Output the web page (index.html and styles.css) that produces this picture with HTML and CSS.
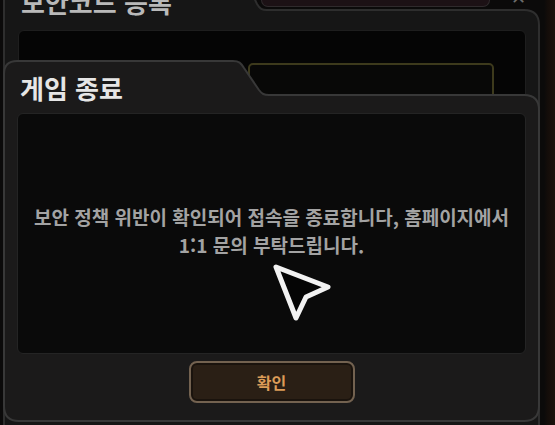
FILE: index.html
```html
<!DOCTYPE html>
<html lang="ko">
<head>
  <meta charset="UTF-8" />
  <meta name="viewport" content="width=device-width, initial-scale=1.0"/>
  <title>게임 종료</title>
  <link rel="stylesheet" href="styles.css">
</head>
<body>
  <div class="desktop">

    <!-- 뒤쪽 창: 보안코드 등록 -->
    <div class="win win-back">
      <svg class="frame" width="537" height="470" viewBox="0 0 537 470">
        <path d="M1 14 Q1 1 14 1 L228 1 C234 1 236 3 239 8 L254 40 C257 45 259 46 264 46 L521 46 Q536 46 536 61 L536 470 L1 470 Z"
              fill="#161616" stroke="#2e2e2e" stroke-width="2"/>
      </svg>
      <div class="back-head">
        <h2 class="back-title">보안코드 등록</h2>
        <div class="back-field"></div>
        <span class="back-close">✕</span>
      </div>
      <div class="back-panel">
        <div class="code-input"></div>
      </div>
    </div>

    <!-- 앞쪽 창: 게임 종료 -->
    <div class="win win-front">
      <svg class="frame" width="537" height="362" viewBox="0 0 537 362">
        <path d="M1 14 Q1 1 14 1 L230 1 C236 1 238 3 241 8 L256 30 C259 34 261 35 266 35 L521 35 Q536 35 536 50 L536 346 Q536 361 521 361 L16 361 Q1 361 1 346 Z"
              fill="#1b1a1a" stroke="#383838" stroke-width="2"/>
      </svg>
      <h1 class="dlg-title">게임 종료</h1>
      <div class="dlg-body">
        <p class="dlg-msg">보안 정책 위반이 확인되어 접속을 종료합니다, 홈페이지에서<br>1:1 문의 부탁드립니다.</p>
      </div>
      <div class="dlg-foot">
        <button class="ok-btn">확인</button>
      </div>
    </div>

    <svg class="cursor" width="72" height="68" viewBox="0 0 72 68">
      <polygon points="10,8 62,28 40,38 30,59" fill="#050505" stroke="#f2f2f2" stroke-width="5" stroke-linejoin="round"/>
    </svg>
  </div>
</body>
</html>
```

FILE: styles.css
```css
* {
  box-sizing: border-box;
  padding: 0;
  margin: 0;
}

body {
  font-family: "Noto Sans CJK KR", "Noto Sans", sans-serif;
  background: #0b0a0a;
  width: 555px;
  height: 425px;
  overflow: hidden;
}

.desktop {
  position: relative;
  width: 555px;
  height: 425px;
  background: linear-gradient(to right, #0b0a0a 0, #0b0a0a 544px, #140d0a 548px, #1a120c 555px);
}

.win {
  position: absolute;
  left: 3px;
  width: 537px;
}

.frame {
  position: absolute;
  left: 0;
  top: 0;
}

/* 뒤쪽 창 */
.win-back {
  top: -36px;
  height: 470px;
}

.back-head {
  position: relative;
  display: grid;
  grid-template-columns: 258px 229px 1fr;
  align-items: start;
  height: 52px;
}

.back-title {
  padding-left: 18px;
  margin-top: 24px;
  font-size: 26px;
  line-height: 28px;
  font-weight: 700;
  color: #b9b9b9;
  white-space: nowrap;
}

.back-field {
  height: 43px;
  background: #1c1115;
  border: 1px solid #2f2a2c;
  border-top: none;
  border-radius: 0 0 7px 7px;
}

.back-close {
  justify-self: end;
  margin: 22px 14px 0 0;
  font-size: 18px;
  line-height: 20px;
  color: #6d6d6d;
}

.back-panel {
  position: relative;
  margin: 14px 0 0 15px;
  width: 508px;
  height: 120px;
  background: #050505;
  border: 1px solid #1e1e1e;
  border-radius: 6px;
  padding: 32px 0 0 229px;
}

.code-input {
  width: 246px;
  height: 60px;
  border: 2px solid #3d3a1c;
  border-radius: 5px;
  background: #080807;
}

/* 앞쪽 창 */
.win-front {
  top: 60px;
  height: 362px;
}

.dlg-title {
  position: relative;
  padding: 14px 0 0 17px;
  font-size: 26px;
  line-height: 28px;
  font-weight: 700;
  color: #e6e6e6;
}

.dlg-body {
  position: relative;
  margin: 11px 14px 0 14px;
  height: 241px;
  background: #0a0a0a;
  border: 1px solid #242424;
  border-radius: 6px;
  display: flex;
  align-items: center;
  justify-content: center;
}

.dlg-msg {
  text-align: center;
  font-size: 19px;
  line-height: 28px;
  font-weight: 700;
  color: #a3a3a3;
  margin-top: -5px;
  white-space: nowrap;
}

.dlg-foot {
  position: relative;
  display: flex;
  justify-content: center;
  margin-top: 7px;
}

.ok-btn {
  width: 166px;
  height: 42px;
  border: 2px solid #736250;
  border-radius: 8px;
  background: #2a1f15;
  box-shadow: inset 0 0 0 2px #1a130d;
  color: #dc9c58;
  font-family: inherit;
  font-size: 16px;
  font-weight: 700;
  cursor: pointer;
}

.cursor {
  position: absolute;
  left: 266px;
  top: 259px;
}
```
